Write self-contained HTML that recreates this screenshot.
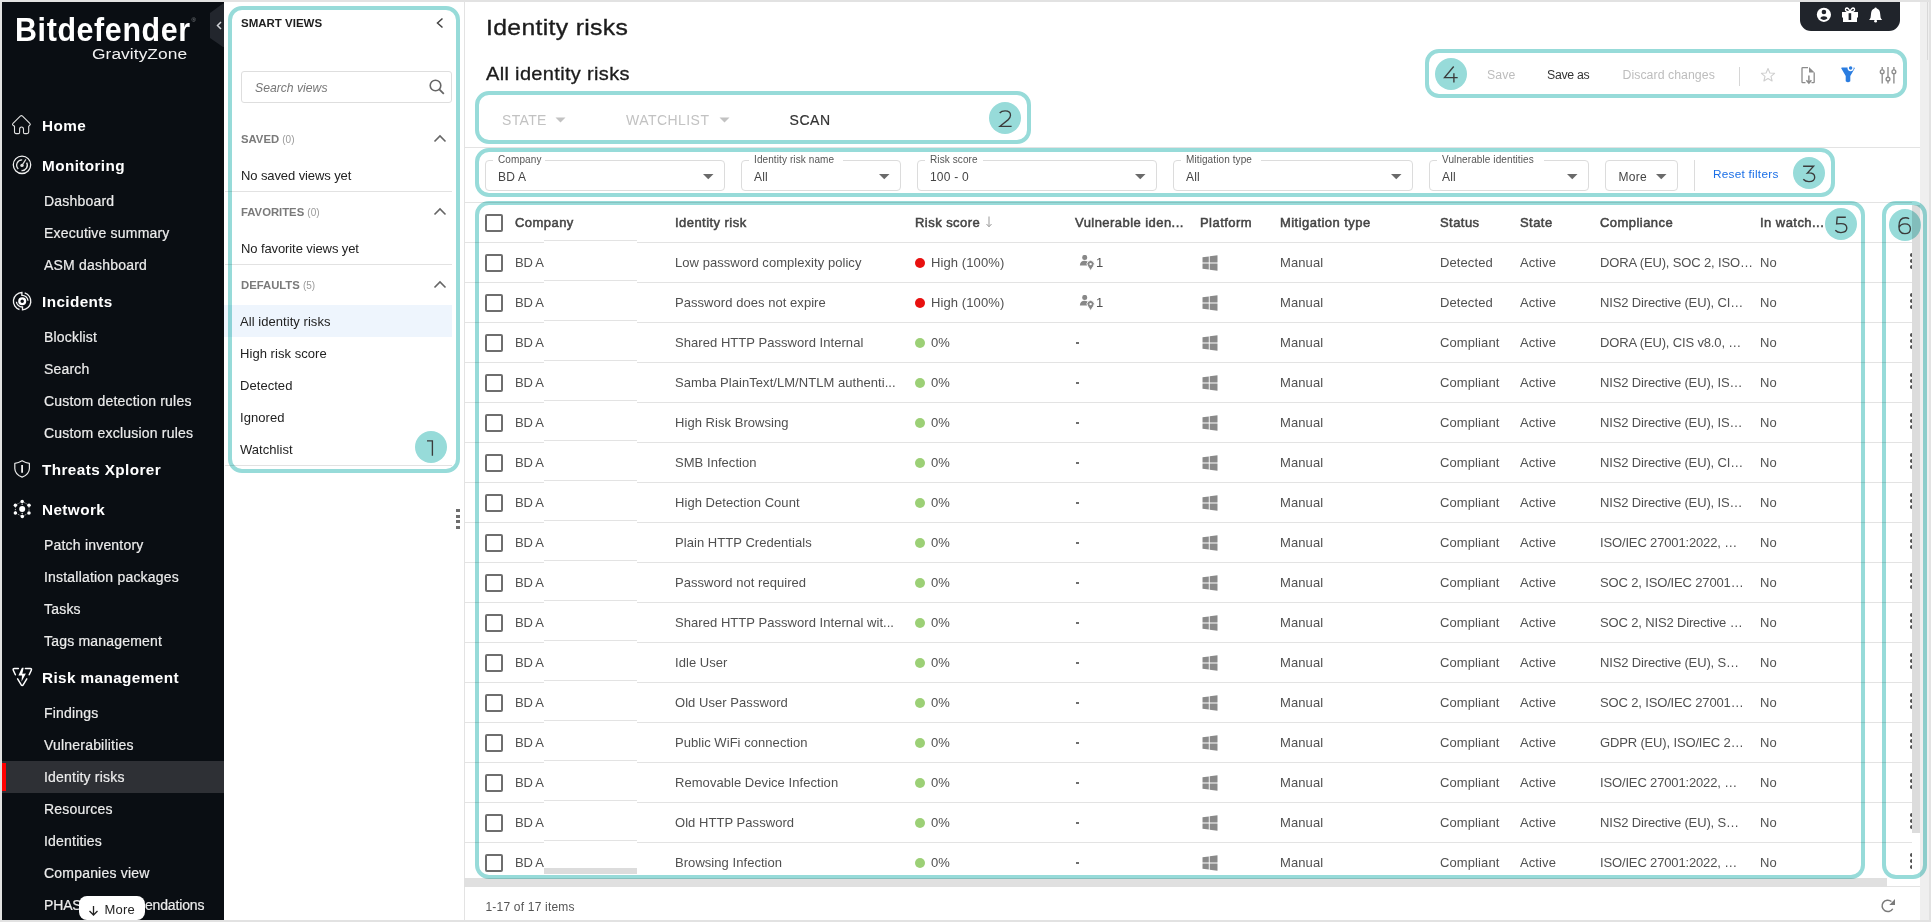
<!DOCTYPE html><html><head><meta charset="utf-8"><style>
html,body{margin:0;padding:0;width:1931px;height:922px;overflow:hidden;background:#fff;}
body{position:relative;font-family:"Liberation Sans",sans-serif;}
.t{position:absolute;white-space:nowrap;}
.r{position:absolute;}
.tb{border:4px solid #97dbd9;mix-blend-mode:multiply;}
.tc{background:#97dbd9;border-radius:50%;mix-blend-mode:multiply;text-align:center;color:#3a3a3a;font-weight:300;}
</style></head><body>
<div class="r" style="left:0px;top:0px;width:1931px;height:922px;background:#e2e2e2;"></div>
<div class="r" style="left:2px;top:2px;width:1927px;height:918px;background:#ffffff;"></div>
<div class="r" style="left:2px;top:2px;width:222px;height:918px;background:#0a0e13;"></div>
<svg class="r" style="left:210px;top:3px;" width="14" height="44" viewBox="0 0 14 44"><path d="M14 0.5 L14 44 L13 44 L0 35 L0 10 L13 0.5 Z" fill="#22262d"/><path d="M11 19 L7.5 22.5 L11 26" stroke="#cfd2d6" stroke-width="1.5" fill="none"/></svg>
<div class="t" style="left:15px;top:13.07px;font-size:33px;line-height:33px;color:#fff;font-weight:700;letter-spacing:0.7px;transform:scaleX(0.92);transform-origin:0 0;">Bitdefender</div>
<div class="t" style="left:191.5px;top:16.92px;font-size:6px;line-height:6px;color:#8a8d91;">®</div>
<div class="t" style="left:91.5px;top:46.38px;font-size:15.5px;line-height:15.5px;color:#f2f2f2;letter-spacing:0.05px;transform:scaleX(1.12);transform-origin:0 0;">GravityZone</div>
<div class="t" style="left:42px;top:118.05px;font-size:15.3px;line-height:15.3px;color:#fff;font-weight:700;letter-spacing:0.4px;">Home</div>
<div class="t" style="left:42px;top:158.05px;font-size:15.3px;line-height:15.3px;color:#fff;font-weight:700;letter-spacing:0.4px;">Monitoring</div>
<div class="t" style="left:42px;top:294.05px;font-size:15.3px;line-height:15.3px;color:#fff;font-weight:700;letter-spacing:0.4px;">Incidents</div>
<div class="t" style="left:42px;top:462.05px;font-size:15.3px;line-height:15.3px;color:#fff;font-weight:700;letter-spacing:0.4px;">Threats Xplorer</div>
<div class="t" style="left:42px;top:502.05px;font-size:15.3px;line-height:15.3px;color:#fff;font-weight:700;letter-spacing:0.4px;">Network</div>
<div class="t" style="left:42px;top:670.05px;font-size:15.3px;line-height:15.3px;color:#fff;font-weight:700;letter-spacing:0.4px;">Risk management</div>
<div class="r" style="left:2px;top:761px;width:222px;height:32px;background:#2e3035;"></div>
<div class="r" style="left:2px;top:763px;width:4px;height:28px;background:#ff0000;"></div>
<div class="t" style="left:44px;top:194.15px;font-size:14px;line-height:14px;color:#ececec;letter-spacing:0.2px;-webkit-text-stroke:0.2px #ececec;">Dashboard</div>
<div class="t" style="left:44px;top:226.15px;font-size:14px;line-height:14px;color:#ececec;letter-spacing:0.2px;-webkit-text-stroke:0.2px #ececec;">Executive summary</div>
<div class="t" style="left:44px;top:258.15px;font-size:14px;line-height:14px;color:#ececec;letter-spacing:0.2px;-webkit-text-stroke:0.2px #ececec;">ASM dashboard</div>
<div class="t" style="left:44px;top:330.15px;font-size:14px;line-height:14px;color:#ececec;letter-spacing:0.2px;-webkit-text-stroke:0.2px #ececec;">Blocklist</div>
<div class="t" style="left:44px;top:362.15px;font-size:14px;line-height:14px;color:#ececec;letter-spacing:0.2px;-webkit-text-stroke:0.2px #ececec;">Search</div>
<div class="t" style="left:44px;top:394.15px;font-size:14px;line-height:14px;color:#ececec;letter-spacing:0.2px;-webkit-text-stroke:0.2px #ececec;">Custom detection rules</div>
<div class="t" style="left:44px;top:426.15px;font-size:14px;line-height:14px;color:#ececec;letter-spacing:0.2px;-webkit-text-stroke:0.2px #ececec;">Custom exclusion rules</div>
<div class="t" style="left:44px;top:538.15px;font-size:14px;line-height:14px;color:#ececec;letter-spacing:0.2px;-webkit-text-stroke:0.2px #ececec;">Patch inventory</div>
<div class="t" style="left:44px;top:570.15px;font-size:14px;line-height:14px;color:#ececec;letter-spacing:0.2px;-webkit-text-stroke:0.2px #ececec;">Installation packages</div>
<div class="t" style="left:44px;top:602.15px;font-size:14px;line-height:14px;color:#ececec;letter-spacing:0.2px;-webkit-text-stroke:0.2px #ececec;">Tasks</div>
<div class="t" style="left:44px;top:634.15px;font-size:14px;line-height:14px;color:#ececec;letter-spacing:0.2px;-webkit-text-stroke:0.2px #ececec;">Tags management</div>
<div class="t" style="left:44px;top:706.15px;font-size:14px;line-height:14px;color:#ececec;letter-spacing:0.2px;-webkit-text-stroke:0.2px #ececec;">Findings</div>
<div class="t" style="left:44px;top:738.15px;font-size:14px;line-height:14px;color:#ececec;letter-spacing:0.2px;-webkit-text-stroke:0.2px #ececec;">Vulnerabilities</div>
<div class="t" style="left:44px;top:770.15px;font-size:14px;line-height:14px;color:#ececec;letter-spacing:0.2px;-webkit-text-stroke:0.2px #ececec;">Identity risks</div>
<div class="t" style="left:44px;top:802.15px;font-size:14px;line-height:14px;color:#ececec;letter-spacing:0.2px;-webkit-text-stroke:0.2px #ececec;">Resources</div>
<div class="t" style="left:44px;top:834.15px;font-size:14px;line-height:14px;color:#ececec;letter-spacing:0.2px;-webkit-text-stroke:0.2px #ececec;">Identities</div>
<div class="t" style="left:44px;top:866.15px;font-size:14px;line-height:14px;color:#ececec;letter-spacing:0.2px;-webkit-text-stroke:0.2px #ececec;">Companies view</div>
<div class="t" style="left:44px;top:898.15px;font-size:14px;line-height:14px;color:#ececec;letter-spacing:-0.15px;-webkit-text-stroke:0.2px #ececec;">PHASR recommendations</div>
<svg class="r" style="left:11px;top:114px;" width="22" height="22" viewBox="0 0 22 22"><path d="M3.5 12.3 L2 11.2 Q1 10.3 2 9.4 L9.3 2.2 Q10.4 1.2 11.5 2.2 L18.8 9.4 Q19.8 10.3 18.8 11.2 L17.7 12.3 L17.7 18 Q17.7 19.6 16 19.6 L13.7 19.6 Q12.5 19.6 12.5 18.4 L12.5 15.2 Q12.5 13 10.5 13 Q8.6 13 8.6 15.2 L8.6 18.4 Q8.6 19.6 7.4 19.6 L5.2 19.6 Q3.5 19.6 3.5 18 Z" fill="none" stroke="#e0e0e0" stroke-width="1.1" stroke-linejoin="round"/></svg>
<svg class="r" style="left:11px;top:155px;" width="22" height="22" viewBox="0 0 22 22"><circle cx="11" cy="9.8" r="8.7" fill="none" stroke="#f0f0f0" stroke-width="1.3"/><path d="M11.2 4.9 A5.3 5.3 0 0 0 7.25 13.95 M15.6 7.55 A5.3 5.3 0 0 1 10.5 15.5" fill="none" stroke="#e8e8e8" stroke-width="1.3"/><path d="M11 10.4 L14.9 4.4" stroke="#ddd" stroke-width="1.2"/><circle cx="11" cy="10.4" r="1.7" fill="#ddd"/></svg>
<svg class="r" style="left:11px;top:290px;" width="22" height="22" viewBox="0 0 22 22"><path d="M8.5 19.5 A8.7 8.7 0 0 1 10.9 2.5 L10.9 5.4 A5.8 5.8 0 0 1 17 10.7 M13.7 2.9 A8.7 8.7 0 0 1 11.5 19.9 L11.5 17 A5.8 5.8 0 0 1 5.4 11.7" fill="none" stroke="#f2f2f2" stroke-width="1.35"/><circle cx="11.2" cy="11.2" r="2.9" fill="none" stroke="#fff" stroke-width="2.3"/></svg>
<svg class="r" style="left:11px;top:458px;" width="22" height="22" viewBox="0 0 22 22"><path d="M11.1 2.7 Q14.8 5 18.4 5.3 L18.4 10.5 Q18.2 16.5 11.1 19.1 Q4 16.5 3.8 10.5 L3.8 5.3 Q7.4 5 11.1 2.7 Z" fill="none" stroke="#e8e8e8" stroke-width="1.2" stroke-linejoin="round"/><path d="M11.1 7 L11.1 14.8" stroke="#f0f0f0" stroke-width="1.8"/></svg>
<svg class="r" style="left:11px;top:498px;" width="22" height="22" viewBox="0 0 22 22"><path d="M11.2 3.4 L18 7.2 L18 14.9 L11.3 18.5 L4.4 14.9 L4.4 7.2 Z" stroke="#bbb" stroke-width="0.9" fill="none" stroke-dasharray="1.3 1.1"/><g fill="#fff"><circle cx="11.2" cy="11" r="3.0"/><circle cx="11.2" cy="3.4" r="1.75"/><circle cx="11.3" cy="18.5" r="1.75"/><circle cx="4.4" cy="7.2" r="1.75"/><circle cx="18" cy="7.2" r="1.75"/><circle cx="4.4" cy="14.9" r="1.75"/><circle cx="18" cy="14.9" r="1.75"/></g><circle cx="11.2" cy="6.2" r="0.8" fill="#ccc"/><circle cx="11.2" cy="15.6" r="0.8" fill="#ccc"/></svg>
<svg class="r" style="left:11px;top:666px;" width="22" height="22" viewBox="0 0 22 22"><path d="M7.4 2.6 L3.4 2.6 Q1.6 2.6 2.3 4.2 L4.4 8.8 M14.4 2.6 L19.2 2.6 Q21 2.6 20.3 4.2 L18.2 8.8 M6.6 12.8 L10.1 18.7 Q11.2 20.2 12.3 18.7 L15.8 12.8" fill="none" stroke="#fff" stroke-width="1.5" stroke-linecap="round" stroke-linejoin="round"/><path d="M10.9 1.8 L7.4 9.5 L11 9.4 L10.5 15.8 L14.9 7.6 L11.3 7.7 L12.7 1.8 Z" fill="#fff"/></svg>
<div class="r" style="left:79px;top:896px;width:66px;height:24px;background:#ffffff;border-radius:8px;"></div>
<svg class="r" style="left:88px;top:905px;" width="11" height="11" viewBox="0 0 11 11"><path d="M5.5 1 L5.5 10 M1.5 6 L5.5 10 L9.5 6" stroke="#222" stroke-width="1.3" fill="none"/></svg>
<div class="t" style="left:104.5px;top:902.50px;font-size:13px;line-height:13px;color:#222;letter-spacing:0.2px;">More</div>
<div class="r" style="left:464px;top:2px;width:1px;height:918px;background:#e3e3e3;"></div>
<div class="t" style="left:241px;top:17.57px;font-size:11.5px;line-height:11.5px;color:#1e1e1e;font-weight:700;">SMART VIEWS</div>
<svg class="r" style="left:435px;top:17px;" width="10" height="12" viewBox="0 0 10 12"><path d="M7.5 1.5 L2.5 6 L7.5 10.5" stroke="#444" stroke-width="1.5" fill="none"/></svg>
<div class="r" style="left:241px;top:71px;width:211px;height:32px;background:#fff;box-sizing:border-box;border:1px solid #dedede;border-radius:3px;"></div>
<div class="t" style="left:255px;top:81.67px;font-size:12.2px;line-height:12.2px;color:#777;font-style:italic;">Search views</div>
<svg class="r" style="left:428px;top:78px;" width="18" height="18" viewBox="0 0 18 18"><circle cx="7.5" cy="7.5" r="5.3" fill="none" stroke="#666" stroke-width="1.6"/><path d="M11.3 11.3 L15.8 15.8" stroke="#666" stroke-width="1.8"/></svg>
<div class="t" style="left:241px;top:133.83px;font-size:11.3px;line-height:11.3px;color:#7a7a7a;font-weight:700">SAVED <span style="font-weight:400;font-size:10px;color:#999">(0)</span></div>
<svg class="r" style="left:433px;top:134.4px;" width="14" height="9" viewBox="0 0 14 9"><path d="M1.5 7.5 L7 2 L12.5 7.5" stroke="#666" stroke-width="1.6" fill="none"/></svg>
<div class="t" style="left:241px;top:206.83px;font-size:11.3px;line-height:11.3px;color:#7a7a7a;font-weight:700">FAVORITES <span style="font-weight:400;font-size:10px;color:#999">(0)</span></div>
<svg class="r" style="left:433px;top:207.4px;" width="14" height="9" viewBox="0 0 14 9"><path d="M1.5 7.5 L7 2 L12.5 7.5" stroke="#666" stroke-width="1.6" fill="none"/></svg>
<div class="t" style="left:241px;top:279.83px;font-size:11.3px;line-height:11.3px;color:#7a7a7a;font-weight:700">DEFAULTS <span style="font-weight:400;font-size:10px;color:#999">(5)</span></div>
<svg class="r" style="left:433px;top:280.4px;" width="14" height="9" viewBox="0 0 14 9"><path d="M1.5 7.5 L7 2 L12.5 7.5" stroke="#666" stroke-width="1.6" fill="none"/></svg>
<div class="t" style="left:241px;top:169.00px;font-size:13px;line-height:13px;color:#222;letter-spacing:-0.1px;">No saved views yet</div>
<div class="r" style="left:225px;top:191px;width:227px;height:1px;background:#e2e2e2;"></div>
<div class="t" style="left:241px;top:242.00px;font-size:13px;line-height:13px;color:#222;letter-spacing:-0.1px;">No favorite views yet</div>
<div class="r" style="left:225px;top:264px;width:227px;height:1px;background:#e2e2e2;"></div>
<div class="r" style="left:224px;top:305px;width:228px;height:32px;background:#eef5fd;"></div>
<div class="t" style="left:240px;top:315.40px;font-size:13px;line-height:13px;color:#222;letter-spacing:0.05px;">All identity risks</div>
<div class="t" style="left:240px;top:347.40px;font-size:13px;line-height:13px;color:#222;letter-spacing:0.05px;">High risk score</div>
<div class="t" style="left:240px;top:379.40px;font-size:13px;line-height:13px;color:#222;letter-spacing:0.05px;">Detected</div>
<div class="t" style="left:240px;top:411.40px;font-size:13px;line-height:13px;color:#222;letter-spacing:0.05px;">Ignored</div>
<div class="t" style="left:240px;top:443.40px;font-size:13px;line-height:13px;color:#222;letter-spacing:0.05px;">Watchlist</div>
<div class="r" style="left:225px;top:465px;width:227px;height:1px;background:#e2e2e2;"></div>
<div class="r" style="left:456.2px;top:509.2px;width:3.8px;height:2.8px;background:#6d6d6d;"></div>
<div class="r" style="left:456.2px;top:514.8px;width:3.8px;height:2.8px;background:#6d6d6d;"></div>
<div class="r" style="left:456.2px;top:520.4px;width:3.8px;height:2.8px;background:#6d6d6d;"></div>
<div class="r" style="left:456.2px;top:526.0px;width:3.8px;height:2.8px;background:#6d6d6d;"></div>
<div class="t" style="left:486px;top:16.55px;font-size:22.5px;line-height:22.5px;color:#1c1c1c;letter-spacing:0.3px;transform:scaleX(1.1);transform-origin:0 0;-webkit-text-stroke:0.35px #1c1c1c;">Identity risks</div>
<div class="t" style="left:486px;top:64.59px;font-size:18.2px;line-height:18.2px;color:#1c1c1c;letter-spacing:0.3px;transform:scaleX(1.1);transform-origin:0 0;-webkit-text-stroke:0.3px #1c1c1c;">All identity risks</div>
<div class="r" style="left:1800px;top:2px;width:100px;height:29px;background:#20242b;border-radius:0 0 11px 11px;"></div>
<svg class="r" style="left:1816px;top:7px;" width="16" height="16" viewBox="0 0 16 16"><circle cx="7.9" cy="7.8" r="7.1" fill="#fff"/><circle cx="7.9" cy="5.0" r="2.3" fill="#20242b"/><path d="M4.4 11.6 Q4.8 9.2 7.9 9.2 Q11 9.2 11.4 11.6 Q9.8 12.9 7.9 12.9 Q6 12.9 4.4 11.6 Z" fill="#20242b"/></svg>
<svg class="r" style="left:1842px;top:7px;" width="16" height="16" viewBox="0 0 16 16"><path d="M0 5 H16 V10.4 H15 V15 H1 V10.4 H0 Z" fill="#fff"/><rect x="6.6" y="6.2" width="2.6" height="6.8" fill="#20242b"/><path d="M8 4.6 Q4.5 4.8 3.6 3.4 Q3 1.2 5 1 Q6.5 1 8 4.6 Q9.5 1 11 1 Q13 1.2 12.4 3.4 Q11.5 4.8 8 4.6" fill="none" stroke="#fff" stroke-width="1.3"/></svg>
<svg class="r" style="left:1869px;top:7px;" width="14" height="16" viewBox="0 0 14 16"><path d="M6.6 0.6 Q7.6 0.6 7.8 1.6 Q11 2.5 11.2 7 L11.6 10.5 Q12.2 12.2 13.2 13 L0 13 Q1 12.2 1.6 10.5 L2 7 Q2.2 2.5 5.4 1.6 Q5.6 0.6 6.6 0.6 Z" fill="#fff"/><circle cx="6.6" cy="14.2" r="1.4" fill="#fff"/></svg>
<div class="t" style="left:1487px;top:68.79px;font-size:12.3px;line-height:12.3px;color:#bdbdbd;letter-spacing:0.1px;">Save</div>
<div class="t" style="left:1547px;top:68.79px;font-size:12.3px;line-height:12.3px;color:#333;letter-spacing:-0.3px;">Save as</div>
<div class="t" style="left:1622.5px;top:68.79px;font-size:12.3px;line-height:12.3px;color:#bdbdbd;letter-spacing:0.05px;">Discard changes</div>
<div class="r" style="left:1739px;top:67px;width:1px;height:19px;background:#d6d6d6;"></div>
<svg class="r" style="left:1760px;top:67px;" width="16" height="16" viewBox="0 0 16 16"><path d="M8 1.5 L9.9 6 L14.6 6.3 L11 9.4 L12.1 14 L8 11.5 L3.9 14 L5 9.4 L1.4 6.3 L6.1 6 Z" fill="none" stroke="#cfcfcf" stroke-width="1.1" stroke-linejoin="round"/></svg>
<svg class="r" style="left:1800px;top:66px;" width="16" height="19" viewBox="0 0 16 19"><path d="M8 1.6 L2.6 1.6 Q2 1.6 2 2.2 L2 16 Q2 16.6 2.6 16.6 L5.5 16.6 M11.5 16.6 L13.6 16.6 Q14.2 16.6 14.2 16 L14.2 6.5" fill="none" stroke="#8c8c8c" stroke-width="1.3"/><path d="M9 1 L14.6 6.6 L9 6.6 Z" fill="#8c8c8c"/><path d="M8.9 9.5 L8.9 16.5 M6.4 14.2 L8.9 17 L11.4 14.2" stroke="#8c8c8c" stroke-width="1.5" fill="none"/></svg>
<svg class="r" style="left:1840px;top:66px;" width="16" height="17" viewBox="0 0 16 17"><path d="M1.2 2.2 Q1.2 1.4 2 1.4 L14 1.4 Q14.8 1.4 14.8 2.2 L10.3 10 L10.3 15.3 Q8 17.3 5.7 15.3 L5.7 10 Z" fill="#2b7de0"/><circle cx="10.6" cy="2.1" r="3.1" fill="#fff"/><circle cx="10.6" cy="1.9" r="1.75" fill="#2b7de0"/></svg>
<svg class="r" style="left:1879px;top:66px;" width="19" height="19" viewBox="0 0 19 19"><g stroke="#8c8c8c" stroke-width="1.35" fill="none"><path d="M3.2 1.1 V17.6 M9 1.1 V17.6 M14.9 1.1 V17.6"/><circle cx="3.2" cy="5.7" r="1.9" fill="#fff"/><circle cx="9" cy="13.1" r="1.9" fill="#fff"/><circle cx="14.9" cy="5.7" r="1.9" fill="#fff"/></g></svg>
<div class="t" style="left:502px;top:113.15px;font-size:14px;line-height:14px;color:#c2c2c2;letter-spacing:0.35px;">STATE</div>
<svg class="r" style="left:555px;top:117px;" width="11" height="6" viewBox="0 0 11 6"><path d="M0.5 0.5 L10.5 0.5 L5.5 5.5 Z" fill="#c2c2c2"/></svg>
<div class="t" style="left:626px;top:113.15px;font-size:14px;line-height:14px;color:#c2c2c2;letter-spacing:0.45px;">WATCHLIST</div>
<svg class="r" style="left:719px;top:117px;" width="11" height="6" viewBox="0 0 11 6"><path d="M0.5 0.5 L10.5 0.5 L5.5 5.5 Z" fill="#c2c2c2"/></svg>
<div class="t" style="left:789.5px;top:113.15px;font-size:14px;line-height:14px;color:#333;letter-spacing:0.55px;-webkit-text-stroke:0.2px #333;">SCAN</div>
<div class="r" style="left:464px;top:147px;width:1456px;height:1px;background:#e3e3e3;"></div>
<div class="r" style="left:464px;top:202px;width:1448px;height:1px;background:#e3e3e3;"></div>
<div class="r" style="left:485px;top:160px;width:240px;height:31px;box-sizing:border-box;border:1px solid #dcdcdc;border-radius:4px;"></div>
<div class="r" style="left:493px;top:158px;width:52px;height:4px;background:#fff;"></div>
<div class="t" style="left:498px;top:154.73px;font-size:10px;line-height:10px;color:#555;letter-spacing:0.1px;">Company</div>
<div class="t" style="left:498px;top:171.04px;font-size:12px;line-height:12px;color:#444;letter-spacing:0.2px;">BD A</div>
<svg class="r" style="left:703px;top:174px;" width="11" height="6" viewBox="0 0 11 6"><path d="M0 0 L10.5 0 L5.25 5.3 Z" fill="#6a6a6a"/></svg>
<div class="r" style="left:741px;top:160px;width:160px;height:31px;box-sizing:border-box;border:1px solid #dcdcdc;border-radius:4px;"></div>
<div class="r" style="left:749px;top:158px;width:94px;height:4px;background:#fff;"></div>
<div class="t" style="left:754px;top:154.73px;font-size:10px;line-height:10px;color:#555;letter-spacing:0.1px;">Identity risk name</div>
<div class="t" style="left:754px;top:171.04px;font-size:12px;line-height:12px;color:#444;letter-spacing:0.2px;">All</div>
<svg class="r" style="left:879px;top:174px;" width="11" height="6" viewBox="0 0 11 6"><path d="M0 0 L10.5 0 L5.25 5.3 Z" fill="#6a6a6a"/></svg>
<div class="r" style="left:917px;top:160px;width:240px;height:31px;box-sizing:border-box;border:1px solid #dcdcdc;border-radius:4px;"></div>
<div class="r" style="left:925px;top:158px;width:58px;height:4px;background:#fff;"></div>
<div class="t" style="left:930px;top:154.73px;font-size:10px;line-height:10px;color:#555;letter-spacing:0.1px;">Risk score</div>
<div class="t" style="left:930px;top:171.04px;font-size:12px;line-height:12px;color:#444;letter-spacing:0.2px;">100 - 0</div>
<svg class="r" style="left:1135px;top:174px;" width="11" height="6" viewBox="0 0 11 6"><path d="M0 0 L10.5 0 L5.25 5.3 Z" fill="#6a6a6a"/></svg>
<div class="r" style="left:1173px;top:160px;width:240px;height:31px;box-sizing:border-box;border:1px solid #dcdcdc;border-radius:4px;"></div>
<div class="r" style="left:1181px;top:158px;width:80px;height:4px;background:#fff;"></div>
<div class="t" style="left:1186px;top:154.73px;font-size:10px;line-height:10px;color:#555;letter-spacing:0.1px;">Mitigation type</div>
<div class="t" style="left:1186px;top:171.04px;font-size:12px;line-height:12px;color:#444;letter-spacing:0.2px;">All</div>
<svg class="r" style="left:1391px;top:174px;" width="11" height="6" viewBox="0 0 11 6"><path d="M0 0 L10.5 0 L5.25 5.3 Z" fill="#6a6a6a"/></svg>
<div class="r" style="left:1429px;top:160px;width:160px;height:31px;box-sizing:border-box;border:1px solid #dcdcdc;border-radius:4px;"></div>
<div class="r" style="left:1437px;top:158px;width:107px;height:4px;background:#fff;"></div>
<div class="t" style="left:1442px;top:154.73px;font-size:10px;line-height:10px;color:#555;letter-spacing:0.1px;">Vulnerable identities</div>
<div class="t" style="left:1442px;top:171.04px;font-size:12px;line-height:12px;color:#444;letter-spacing:0.2px;">All</div>
<svg class="r" style="left:1567px;top:174px;" width="11" height="6" viewBox="0 0 11 6"><path d="M0 0 L10.5 0 L5.25 5.3 Z" fill="#6a6a6a"/></svg>
<div class="r" style="left:1605px;top:160px;width:73px;height:31px;box-sizing:border-box;border:1px solid #dcdcdc;border-radius:4px;"></div>
<div class="t" style="left:1618.5px;top:171.04px;font-size:12px;line-height:12px;color:#444;letter-spacing:0.3px;">More</div>
<svg class="r" style="left:1655.5px;top:174px;" width="11" height="6" viewBox="0 0 11 6"><path d="M0 0 L10.5 0 L5.25 5.3 Z" fill="#6a6a6a"/></svg>
<div class="r" style="left:1694px;top:160px;width:1px;height:31px;background:#dcdcdc;"></div>
<div class="t" style="left:1713px;top:168.81px;font-size:11.8px;line-height:11.8px;color:#1b6fe6;letter-spacing:0.25px;">Reset filters</div>
<div class="r" style="left:485px;top:214px;width:18px;height:18px;background:transparent;box-sizing:border-box;border:2px solid #6e6e6e;border-radius:2px;"></div>
<div class="t" style="left:515px;top:216.00px;font-size:13px;line-height:13px;color:#444;letter-spacing:0.45px;-webkit-text-stroke:0.5px #444;">Company</div>
<div class="t" style="left:675px;top:216.00px;font-size:13px;line-height:13px;color:#444;letter-spacing:0.45px;-webkit-text-stroke:0.5px #444;">Identity risk</div>
<div class="t" style="left:915px;top:216.00px;font-size:13px;line-height:13px;color:#444;letter-spacing:0.45px;-webkit-text-stroke:0.5px #444;">Risk score</div>
<div class="t" style="left:1075px;top:216.00px;font-size:13px;line-height:13px;color:#444;letter-spacing:0.45px;-webkit-text-stroke:0.5px #444;">Vulnerable iden...</div>
<div class="t" style="left:1200px;top:216.00px;font-size:13px;line-height:13px;color:#444;letter-spacing:0.45px;-webkit-text-stroke:0.5px #444;">Platform</div>
<div class="t" style="left:1280px;top:216.00px;font-size:13px;line-height:13px;color:#444;letter-spacing:0.45px;-webkit-text-stroke:0.5px #444;">Mitigation type</div>
<div class="t" style="left:1440px;top:216.00px;font-size:13px;line-height:13px;color:#444;letter-spacing:0.45px;-webkit-text-stroke:0.5px #444;">Status</div>
<div class="t" style="left:1520px;top:216.00px;font-size:13px;line-height:13px;color:#444;letter-spacing:0.45px;-webkit-text-stroke:0.5px #444;">State</div>
<div class="t" style="left:1600px;top:216.00px;font-size:13px;line-height:13px;color:#444;letter-spacing:0.45px;-webkit-text-stroke:0.5px #444;">Compliance</div>
<div class="t" style="left:1760px;top:216.00px;font-size:13px;line-height:13px;color:#444;letter-spacing:0.45px;-webkit-text-stroke:0.5px #444;">In watch...</div>
<svg class="r" style="left:985px;top:215.5px;" width="8" height="12" viewBox="0 0 8 12"><path d="M4 0.5 L4 10.5 M1.5 8 L4 10.8 L6.5 8" stroke="#999" stroke-width="1" fill="none"/></svg>
<div class="r" style="left:464px;top:242px;width:80px;height:1px;background:#e3e3e3;"></div>
<div class="r" style="left:544px;top:240px;width:93px;height:1px;background:#e3e3e3;"></div>
<div class="r" style="left:637px;top:242px;width:1275px;height:1px;background:#e3e3e3;"></div>
<div class="r" style="left:485px;top:254px;width:18px;height:18px;background:transparent;box-sizing:border-box;border:2px solid #6e6e6e;border-radius:2px;"></div>
<div class="t" style="left:515px;top:255.70px;font-size:13px;line-height:13px;color:#505050;letter-spacing:-0.25px;">BD A</div>
<div class="t" style="left:675px;top:255.70px;font-size:13px;line-height:13px;color:#505050;letter-spacing:0.05px;">Low password complexity policy</div>
<div class="r" style="left:915px;top:258px;width:10px;height:10px;background:#e8100f;border-radius:50%;"></div>
<div class="t" style="left:931px;top:255.70px;font-size:13px;line-height:13px;color:#505050;letter-spacing:0.1px;">High (100%)</div>
<svg class="r" style="left:1079px;top:255px;" width="16" height="16" viewBox="0 0 16 16"><circle cx="5.7" cy="2.4" r="2.5" fill="#888"/><path d="M0.9 10.6 Q0.9 5.7 5.7 5.7 Q8.4 5.7 9.6 7.4 L8.2 10.6 Z" fill="#888"/><path d="M11.6 15.6 L8.6 11 A3.6 3.6 0 1 1 14.6 11 Z" fill="#888" stroke="#fff" stroke-width="0.9"/><circle cx="11.6" cy="9.1" r="1.2" fill="#fff"/></svg>
<div class="t" style="left:1096px;top:255.70px;font-size:13px;line-height:13px;color:#505050;">1</div>
<svg class="r" style="left:1202px;top:255px;" width="16" height="16" viewBox="0 0 16 16"><path d="M0.5 2.3 L6.8 1.4 L6.8 7.6 L0.5 7.6 Z M7.7 1.3 L15.5 0.2 L15.5 7.6 L7.7 7.6 Z M0.5 8.5 L6.8 8.5 L6.8 14.6 L0.5 13.7 Z M7.7 8.5 L15.5 8.5 L15.5 15.8 L7.7 14.7 Z" fill="#8a8a8a"/></svg>
<div class="t" style="left:1280px;top:255.70px;font-size:13px;line-height:13px;color:#505050;letter-spacing:0.1px;">Manual</div>
<div class="t" style="left:1440px;top:255.70px;font-size:13px;line-height:13px;color:#505050;letter-spacing:0.1px;">Detected</div>
<div class="t" style="left:1520px;top:255.70px;font-size:13px;line-height:13px;color:#505050;letter-spacing:0.1px;">Active</div>
<div class="t" style="left:1600px;top:255.70px;font-size:13px;line-height:13px;color:#505050;letter-spacing:-0.15px;">DORA (EU), SOC 2, ISO…</div>
<div class="t" style="left:1760px;top:255.70px;font-size:13px;line-height:13px;color:#505050;letter-spacing:0.1px;">No</div>
<div class="r" style="left:1900px;top:250px;width:12px;height:22px;overflow:hidden"><div class="r" style="left:10.2px;top:3px;width:3.6px;height:3.6px;border-radius:50%;background:#555"></div><div class="r" style="left:10.2px;top:9px;width:3.6px;height:3.6px;border-radius:50%;background:#555"></div><div class="r" style="left:10.2px;top:15px;width:3.6px;height:3.6px;border-radius:50%;background:#555"></div></div>
<div class="r" style="left:464px;top:282px;width:80px;height:1px;background:#e3e3e3;"></div>
<div class="r" style="left:544px;top:280px;width:93px;height:1px;background:#e3e3e3;"></div>
<div class="r" style="left:637px;top:282px;width:1275px;height:1px;background:#e3e3e3;"></div>
<div class="r" style="left:485px;top:294px;width:18px;height:18px;background:transparent;box-sizing:border-box;border:2px solid #6e6e6e;border-radius:2px;"></div>
<div class="t" style="left:515px;top:295.70px;font-size:13px;line-height:13px;color:#505050;letter-spacing:-0.25px;">BD A</div>
<div class="t" style="left:675px;top:295.70px;font-size:13px;line-height:13px;color:#505050;letter-spacing:0.05px;">Password does not expire</div>
<div class="r" style="left:915px;top:298px;width:10px;height:10px;background:#e8100f;border-radius:50%;"></div>
<div class="t" style="left:931px;top:295.70px;font-size:13px;line-height:13px;color:#505050;letter-spacing:0.1px;">High (100%)</div>
<svg class="r" style="left:1079px;top:295px;" width="16" height="16" viewBox="0 0 16 16"><circle cx="5.7" cy="2.4" r="2.5" fill="#888"/><path d="M0.9 10.6 Q0.9 5.7 5.7 5.7 Q8.4 5.7 9.6 7.4 L8.2 10.6 Z" fill="#888"/><path d="M11.6 15.6 L8.6 11 A3.6 3.6 0 1 1 14.6 11 Z" fill="#888" stroke="#fff" stroke-width="0.9"/><circle cx="11.6" cy="9.1" r="1.2" fill="#fff"/></svg>
<div class="t" style="left:1096px;top:295.70px;font-size:13px;line-height:13px;color:#505050;">1</div>
<svg class="r" style="left:1202px;top:295px;" width="16" height="16" viewBox="0 0 16 16"><path d="M0.5 2.3 L6.8 1.4 L6.8 7.6 L0.5 7.6 Z M7.7 1.3 L15.5 0.2 L15.5 7.6 L7.7 7.6 Z M0.5 8.5 L6.8 8.5 L6.8 14.6 L0.5 13.7 Z M7.7 8.5 L15.5 8.5 L15.5 15.8 L7.7 14.7 Z" fill="#8a8a8a"/></svg>
<div class="t" style="left:1280px;top:295.70px;font-size:13px;line-height:13px;color:#505050;letter-spacing:0.1px;">Manual</div>
<div class="t" style="left:1440px;top:295.70px;font-size:13px;line-height:13px;color:#505050;letter-spacing:0.1px;">Detected</div>
<div class="t" style="left:1520px;top:295.70px;font-size:13px;line-height:13px;color:#505050;letter-spacing:0.1px;">Active</div>
<div class="t" style="left:1600px;top:295.70px;font-size:13px;line-height:13px;color:#505050;letter-spacing:-0.15px;">NIS2 Directive (EU), CI…</div>
<div class="t" style="left:1760px;top:295.70px;font-size:13px;line-height:13px;color:#505050;letter-spacing:0.1px;">No</div>
<div class="r" style="left:1900px;top:290px;width:12px;height:22px;overflow:hidden"><div class="r" style="left:10.2px;top:3px;width:3.6px;height:3.6px;border-radius:50%;background:#555"></div><div class="r" style="left:10.2px;top:9px;width:3.6px;height:3.6px;border-radius:50%;background:#555"></div><div class="r" style="left:10.2px;top:15px;width:3.6px;height:3.6px;border-radius:50%;background:#555"></div></div>
<div class="r" style="left:464px;top:322px;width:80px;height:1px;background:#e3e3e3;"></div>
<div class="r" style="left:544px;top:320px;width:93px;height:1px;background:#e3e3e3;"></div>
<div class="r" style="left:637px;top:322px;width:1275px;height:1px;background:#e3e3e3;"></div>
<div class="r" style="left:485px;top:334px;width:18px;height:18px;background:transparent;box-sizing:border-box;border:2px solid #6e6e6e;border-radius:2px;"></div>
<div class="t" style="left:515px;top:335.70px;font-size:13px;line-height:13px;color:#505050;letter-spacing:-0.25px;">BD A</div>
<div class="t" style="left:675px;top:335.70px;font-size:13px;line-height:13px;color:#505050;letter-spacing:0.05px;">Shared HTTP Password Internal</div>
<div class="r" style="left:915px;top:338px;width:10px;height:10px;background:#9cd076;border-radius:50%;"></div>
<div class="t" style="left:931px;top:335.70px;font-size:13px;line-height:13px;color:#505050;letter-spacing:0.1px;">0%</div>
<div class="r" style="left:1076px;top:342.2px;width:3.2px;height:1.7px;background:#6e6e6e;"></div>
<svg class="r" style="left:1202px;top:335px;" width="16" height="16" viewBox="0 0 16 16"><path d="M0.5 2.3 L6.8 1.4 L6.8 7.6 L0.5 7.6 Z M7.7 1.3 L15.5 0.2 L15.5 7.6 L7.7 7.6 Z M0.5 8.5 L6.8 8.5 L6.8 14.6 L0.5 13.7 Z M7.7 8.5 L15.5 8.5 L15.5 15.8 L7.7 14.7 Z" fill="#8a8a8a"/></svg>
<div class="t" style="left:1280px;top:335.70px;font-size:13px;line-height:13px;color:#505050;letter-spacing:0.1px;">Manual</div>
<div class="t" style="left:1440px;top:335.70px;font-size:13px;line-height:13px;color:#505050;letter-spacing:0.1px;">Compliant</div>
<div class="t" style="left:1520px;top:335.70px;font-size:13px;line-height:13px;color:#505050;letter-spacing:0.1px;">Active</div>
<div class="t" style="left:1600px;top:335.70px;font-size:13px;line-height:13px;color:#505050;letter-spacing:-0.15px;">DORA (EU), CIS v8.0, …</div>
<div class="t" style="left:1760px;top:335.70px;font-size:13px;line-height:13px;color:#505050;letter-spacing:0.1px;">No</div>
<div class="r" style="left:1900px;top:330px;width:12px;height:22px;overflow:hidden"><div class="r" style="left:10.2px;top:3px;width:3.6px;height:3.6px;border-radius:50%;background:#555"></div><div class="r" style="left:10.2px;top:9px;width:3.6px;height:3.6px;border-radius:50%;background:#555"></div><div class="r" style="left:10.2px;top:15px;width:3.6px;height:3.6px;border-radius:50%;background:#555"></div></div>
<div class="r" style="left:464px;top:362px;width:80px;height:1px;background:#e3e3e3;"></div>
<div class="r" style="left:544px;top:360px;width:93px;height:1px;background:#e3e3e3;"></div>
<div class="r" style="left:637px;top:362px;width:1275px;height:1px;background:#e3e3e3;"></div>
<div class="r" style="left:485px;top:374px;width:18px;height:18px;background:transparent;box-sizing:border-box;border:2px solid #6e6e6e;border-radius:2px;"></div>
<div class="t" style="left:515px;top:375.70px;font-size:13px;line-height:13px;color:#505050;letter-spacing:-0.25px;">BD A</div>
<div class="t" style="left:675px;top:375.70px;font-size:13px;line-height:13px;color:#505050;letter-spacing:0.05px;">Samba PlainText/LM/NTLM authenti...</div>
<div class="r" style="left:915px;top:378px;width:10px;height:10px;background:#9cd076;border-radius:50%;"></div>
<div class="t" style="left:931px;top:375.70px;font-size:13px;line-height:13px;color:#505050;letter-spacing:0.1px;">0%</div>
<div class="r" style="left:1076px;top:382.2px;width:3.2px;height:1.7px;background:#6e6e6e;"></div>
<svg class="r" style="left:1202px;top:375px;" width="16" height="16" viewBox="0 0 16 16"><path d="M0.5 2.3 L6.8 1.4 L6.8 7.6 L0.5 7.6 Z M7.7 1.3 L15.5 0.2 L15.5 7.6 L7.7 7.6 Z M0.5 8.5 L6.8 8.5 L6.8 14.6 L0.5 13.7 Z M7.7 8.5 L15.5 8.5 L15.5 15.8 L7.7 14.7 Z" fill="#8a8a8a"/></svg>
<div class="t" style="left:1280px;top:375.70px;font-size:13px;line-height:13px;color:#505050;letter-spacing:0.1px;">Manual</div>
<div class="t" style="left:1440px;top:375.70px;font-size:13px;line-height:13px;color:#505050;letter-spacing:0.1px;">Compliant</div>
<div class="t" style="left:1520px;top:375.70px;font-size:13px;line-height:13px;color:#505050;letter-spacing:0.1px;">Active</div>
<div class="t" style="left:1600px;top:375.70px;font-size:13px;line-height:13px;color:#505050;letter-spacing:-0.15px;">NIS2 Directive (EU), IS…</div>
<div class="t" style="left:1760px;top:375.70px;font-size:13px;line-height:13px;color:#505050;letter-spacing:0.1px;">No</div>
<div class="r" style="left:1900px;top:370px;width:12px;height:22px;overflow:hidden"><div class="r" style="left:10.2px;top:3px;width:3.6px;height:3.6px;border-radius:50%;background:#555"></div><div class="r" style="left:10.2px;top:9px;width:3.6px;height:3.6px;border-radius:50%;background:#555"></div><div class="r" style="left:10.2px;top:15px;width:3.6px;height:3.6px;border-radius:50%;background:#555"></div></div>
<div class="r" style="left:464px;top:402px;width:80px;height:1px;background:#e3e3e3;"></div>
<div class="r" style="left:544px;top:400px;width:93px;height:1px;background:#e3e3e3;"></div>
<div class="r" style="left:637px;top:402px;width:1275px;height:1px;background:#e3e3e3;"></div>
<div class="r" style="left:485px;top:414px;width:18px;height:18px;background:transparent;box-sizing:border-box;border:2px solid #6e6e6e;border-radius:2px;"></div>
<div class="t" style="left:515px;top:415.70px;font-size:13px;line-height:13px;color:#505050;letter-spacing:-0.25px;">BD A</div>
<div class="t" style="left:675px;top:415.70px;font-size:13px;line-height:13px;color:#505050;letter-spacing:0.05px;">High Risk Browsing</div>
<div class="r" style="left:915px;top:418px;width:10px;height:10px;background:#9cd076;border-radius:50%;"></div>
<div class="t" style="left:931px;top:415.70px;font-size:13px;line-height:13px;color:#505050;letter-spacing:0.1px;">0%</div>
<div class="r" style="left:1076px;top:422.2px;width:3.2px;height:1.7px;background:#6e6e6e;"></div>
<svg class="r" style="left:1202px;top:415px;" width="16" height="16" viewBox="0 0 16 16"><path d="M0.5 2.3 L6.8 1.4 L6.8 7.6 L0.5 7.6 Z M7.7 1.3 L15.5 0.2 L15.5 7.6 L7.7 7.6 Z M0.5 8.5 L6.8 8.5 L6.8 14.6 L0.5 13.7 Z M7.7 8.5 L15.5 8.5 L15.5 15.8 L7.7 14.7 Z" fill="#8a8a8a"/></svg>
<div class="t" style="left:1280px;top:415.70px;font-size:13px;line-height:13px;color:#505050;letter-spacing:0.1px;">Manual</div>
<div class="t" style="left:1440px;top:415.70px;font-size:13px;line-height:13px;color:#505050;letter-spacing:0.1px;">Compliant</div>
<div class="t" style="left:1520px;top:415.70px;font-size:13px;line-height:13px;color:#505050;letter-spacing:0.1px;">Active</div>
<div class="t" style="left:1600px;top:415.70px;font-size:13px;line-height:13px;color:#505050;letter-spacing:-0.15px;">NIS2 Directive (EU), IS…</div>
<div class="t" style="left:1760px;top:415.70px;font-size:13px;line-height:13px;color:#505050;letter-spacing:0.1px;">No</div>
<div class="r" style="left:1900px;top:410px;width:12px;height:22px;overflow:hidden"><div class="r" style="left:10.2px;top:3px;width:3.6px;height:3.6px;border-radius:50%;background:#555"></div><div class="r" style="left:10.2px;top:9px;width:3.6px;height:3.6px;border-radius:50%;background:#555"></div><div class="r" style="left:10.2px;top:15px;width:3.6px;height:3.6px;border-radius:50%;background:#555"></div></div>
<div class="r" style="left:464px;top:442px;width:80px;height:1px;background:#e3e3e3;"></div>
<div class="r" style="left:544px;top:440px;width:93px;height:1px;background:#e3e3e3;"></div>
<div class="r" style="left:637px;top:442px;width:1275px;height:1px;background:#e3e3e3;"></div>
<div class="r" style="left:485px;top:454px;width:18px;height:18px;background:transparent;box-sizing:border-box;border:2px solid #6e6e6e;border-radius:2px;"></div>
<div class="t" style="left:515px;top:455.70px;font-size:13px;line-height:13px;color:#505050;letter-spacing:-0.25px;">BD A</div>
<div class="t" style="left:675px;top:455.70px;font-size:13px;line-height:13px;color:#505050;letter-spacing:0.05px;">SMB Infection</div>
<div class="r" style="left:915px;top:458px;width:10px;height:10px;background:#9cd076;border-radius:50%;"></div>
<div class="t" style="left:931px;top:455.70px;font-size:13px;line-height:13px;color:#505050;letter-spacing:0.1px;">0%</div>
<div class="r" style="left:1076px;top:462.2px;width:3.2px;height:1.7px;background:#6e6e6e;"></div>
<svg class="r" style="left:1202px;top:455px;" width="16" height="16" viewBox="0 0 16 16"><path d="M0.5 2.3 L6.8 1.4 L6.8 7.6 L0.5 7.6 Z M7.7 1.3 L15.5 0.2 L15.5 7.6 L7.7 7.6 Z M0.5 8.5 L6.8 8.5 L6.8 14.6 L0.5 13.7 Z M7.7 8.5 L15.5 8.5 L15.5 15.8 L7.7 14.7 Z" fill="#8a8a8a"/></svg>
<div class="t" style="left:1280px;top:455.70px;font-size:13px;line-height:13px;color:#505050;letter-spacing:0.1px;">Manual</div>
<div class="t" style="left:1440px;top:455.70px;font-size:13px;line-height:13px;color:#505050;letter-spacing:0.1px;">Compliant</div>
<div class="t" style="left:1520px;top:455.70px;font-size:13px;line-height:13px;color:#505050;letter-spacing:0.1px;">Active</div>
<div class="t" style="left:1600px;top:455.70px;font-size:13px;line-height:13px;color:#505050;letter-spacing:-0.15px;">NIS2 Directive (EU), CI…</div>
<div class="t" style="left:1760px;top:455.70px;font-size:13px;line-height:13px;color:#505050;letter-spacing:0.1px;">No</div>
<div class="r" style="left:1900px;top:450px;width:12px;height:22px;overflow:hidden"><div class="r" style="left:10.2px;top:3px;width:3.6px;height:3.6px;border-radius:50%;background:#555"></div><div class="r" style="left:10.2px;top:9px;width:3.6px;height:3.6px;border-radius:50%;background:#555"></div><div class="r" style="left:10.2px;top:15px;width:3.6px;height:3.6px;border-radius:50%;background:#555"></div></div>
<div class="r" style="left:464px;top:482px;width:80px;height:1px;background:#e3e3e3;"></div>
<div class="r" style="left:544px;top:480px;width:93px;height:1px;background:#e3e3e3;"></div>
<div class="r" style="left:637px;top:482px;width:1275px;height:1px;background:#e3e3e3;"></div>
<div class="r" style="left:485px;top:494px;width:18px;height:18px;background:transparent;box-sizing:border-box;border:2px solid #6e6e6e;border-radius:2px;"></div>
<div class="t" style="left:515px;top:495.70px;font-size:13px;line-height:13px;color:#505050;letter-spacing:-0.25px;">BD A</div>
<div class="t" style="left:675px;top:495.70px;font-size:13px;line-height:13px;color:#505050;letter-spacing:0.05px;">High Detection Count</div>
<div class="r" style="left:915px;top:498px;width:10px;height:10px;background:#9cd076;border-radius:50%;"></div>
<div class="t" style="left:931px;top:495.70px;font-size:13px;line-height:13px;color:#505050;letter-spacing:0.1px;">0%</div>
<div class="r" style="left:1076px;top:502.2px;width:3.2px;height:1.7px;background:#6e6e6e;"></div>
<svg class="r" style="left:1202px;top:495px;" width="16" height="16" viewBox="0 0 16 16"><path d="M0.5 2.3 L6.8 1.4 L6.8 7.6 L0.5 7.6 Z M7.7 1.3 L15.5 0.2 L15.5 7.6 L7.7 7.6 Z M0.5 8.5 L6.8 8.5 L6.8 14.6 L0.5 13.7 Z M7.7 8.5 L15.5 8.5 L15.5 15.8 L7.7 14.7 Z" fill="#8a8a8a"/></svg>
<div class="t" style="left:1280px;top:495.70px;font-size:13px;line-height:13px;color:#505050;letter-spacing:0.1px;">Manual</div>
<div class="t" style="left:1440px;top:495.70px;font-size:13px;line-height:13px;color:#505050;letter-spacing:0.1px;">Compliant</div>
<div class="t" style="left:1520px;top:495.70px;font-size:13px;line-height:13px;color:#505050;letter-spacing:0.1px;">Active</div>
<div class="t" style="left:1600px;top:495.70px;font-size:13px;line-height:13px;color:#505050;letter-spacing:-0.15px;">NIS2 Directive (EU), IS…</div>
<div class="t" style="left:1760px;top:495.70px;font-size:13px;line-height:13px;color:#505050;letter-spacing:0.1px;">No</div>
<div class="r" style="left:1900px;top:490px;width:12px;height:22px;overflow:hidden"><div class="r" style="left:10.2px;top:3px;width:3.6px;height:3.6px;border-radius:50%;background:#555"></div><div class="r" style="left:10.2px;top:9px;width:3.6px;height:3.6px;border-radius:50%;background:#555"></div><div class="r" style="left:10.2px;top:15px;width:3.6px;height:3.6px;border-radius:50%;background:#555"></div></div>
<div class="r" style="left:464px;top:522px;width:80px;height:1px;background:#e3e3e3;"></div>
<div class="r" style="left:544px;top:520px;width:93px;height:1px;background:#e3e3e3;"></div>
<div class="r" style="left:637px;top:522px;width:1275px;height:1px;background:#e3e3e3;"></div>
<div class="r" style="left:485px;top:534px;width:18px;height:18px;background:transparent;box-sizing:border-box;border:2px solid #6e6e6e;border-radius:2px;"></div>
<div class="t" style="left:515px;top:535.70px;font-size:13px;line-height:13px;color:#505050;letter-spacing:-0.25px;">BD A</div>
<div class="t" style="left:675px;top:535.70px;font-size:13px;line-height:13px;color:#505050;letter-spacing:0.05px;">Plain HTTP Credentials</div>
<div class="r" style="left:915px;top:538px;width:10px;height:10px;background:#9cd076;border-radius:50%;"></div>
<div class="t" style="left:931px;top:535.70px;font-size:13px;line-height:13px;color:#505050;letter-spacing:0.1px;">0%</div>
<div class="r" style="left:1076px;top:542.2px;width:3.2px;height:1.7px;background:#6e6e6e;"></div>
<svg class="r" style="left:1202px;top:535px;" width="16" height="16" viewBox="0 0 16 16"><path d="M0.5 2.3 L6.8 1.4 L6.8 7.6 L0.5 7.6 Z M7.7 1.3 L15.5 0.2 L15.5 7.6 L7.7 7.6 Z M0.5 8.5 L6.8 8.5 L6.8 14.6 L0.5 13.7 Z M7.7 8.5 L15.5 8.5 L15.5 15.8 L7.7 14.7 Z" fill="#8a8a8a"/></svg>
<div class="t" style="left:1280px;top:535.70px;font-size:13px;line-height:13px;color:#505050;letter-spacing:0.1px;">Manual</div>
<div class="t" style="left:1440px;top:535.70px;font-size:13px;line-height:13px;color:#505050;letter-spacing:0.1px;">Compliant</div>
<div class="t" style="left:1520px;top:535.70px;font-size:13px;line-height:13px;color:#505050;letter-spacing:0.1px;">Active</div>
<div class="t" style="left:1600px;top:535.70px;font-size:13px;line-height:13px;color:#505050;letter-spacing:-0.15px;">ISO/IEC 27001:2022, …</div>
<div class="t" style="left:1760px;top:535.70px;font-size:13px;line-height:13px;color:#505050;letter-spacing:0.1px;">No</div>
<div class="r" style="left:1900px;top:530px;width:12px;height:22px;overflow:hidden"><div class="r" style="left:10.2px;top:3px;width:3.6px;height:3.6px;border-radius:50%;background:#555"></div><div class="r" style="left:10.2px;top:9px;width:3.6px;height:3.6px;border-radius:50%;background:#555"></div><div class="r" style="left:10.2px;top:15px;width:3.6px;height:3.6px;border-radius:50%;background:#555"></div></div>
<div class="r" style="left:464px;top:562px;width:80px;height:1px;background:#e3e3e3;"></div>
<div class="r" style="left:544px;top:560px;width:93px;height:1px;background:#e3e3e3;"></div>
<div class="r" style="left:637px;top:562px;width:1275px;height:1px;background:#e3e3e3;"></div>
<div class="r" style="left:485px;top:574px;width:18px;height:18px;background:transparent;box-sizing:border-box;border:2px solid #6e6e6e;border-radius:2px;"></div>
<div class="t" style="left:515px;top:575.70px;font-size:13px;line-height:13px;color:#505050;letter-spacing:-0.25px;">BD A</div>
<div class="t" style="left:675px;top:575.70px;font-size:13px;line-height:13px;color:#505050;letter-spacing:0.05px;">Password not required</div>
<div class="r" style="left:915px;top:578px;width:10px;height:10px;background:#9cd076;border-radius:50%;"></div>
<div class="t" style="left:931px;top:575.70px;font-size:13px;line-height:13px;color:#505050;letter-spacing:0.1px;">0%</div>
<div class="r" style="left:1076px;top:582.2px;width:3.2px;height:1.7px;background:#6e6e6e;"></div>
<svg class="r" style="left:1202px;top:575px;" width="16" height="16" viewBox="0 0 16 16"><path d="M0.5 2.3 L6.8 1.4 L6.8 7.6 L0.5 7.6 Z M7.7 1.3 L15.5 0.2 L15.5 7.6 L7.7 7.6 Z M0.5 8.5 L6.8 8.5 L6.8 14.6 L0.5 13.7 Z M7.7 8.5 L15.5 8.5 L15.5 15.8 L7.7 14.7 Z" fill="#8a8a8a"/></svg>
<div class="t" style="left:1280px;top:575.70px;font-size:13px;line-height:13px;color:#505050;letter-spacing:0.1px;">Manual</div>
<div class="t" style="left:1440px;top:575.70px;font-size:13px;line-height:13px;color:#505050;letter-spacing:0.1px;">Compliant</div>
<div class="t" style="left:1520px;top:575.70px;font-size:13px;line-height:13px;color:#505050;letter-spacing:0.1px;">Active</div>
<div class="t" style="left:1600px;top:575.70px;font-size:13px;line-height:13px;color:#505050;letter-spacing:-0.15px;">SOC 2, ISO/IEC 27001…</div>
<div class="t" style="left:1760px;top:575.70px;font-size:13px;line-height:13px;color:#505050;letter-spacing:0.1px;">No</div>
<div class="r" style="left:1900px;top:570px;width:12px;height:22px;overflow:hidden"><div class="r" style="left:10.2px;top:3px;width:3.6px;height:3.6px;border-radius:50%;background:#555"></div><div class="r" style="left:10.2px;top:9px;width:3.6px;height:3.6px;border-radius:50%;background:#555"></div><div class="r" style="left:10.2px;top:15px;width:3.6px;height:3.6px;border-radius:50%;background:#555"></div></div>
<div class="r" style="left:464px;top:602px;width:80px;height:1px;background:#e3e3e3;"></div>
<div class="r" style="left:544px;top:600px;width:93px;height:1px;background:#e3e3e3;"></div>
<div class="r" style="left:637px;top:602px;width:1275px;height:1px;background:#e3e3e3;"></div>
<div class="r" style="left:485px;top:614px;width:18px;height:18px;background:transparent;box-sizing:border-box;border:2px solid #6e6e6e;border-radius:2px;"></div>
<div class="t" style="left:515px;top:615.70px;font-size:13px;line-height:13px;color:#505050;letter-spacing:-0.25px;">BD A</div>
<div class="t" style="left:675px;top:615.70px;font-size:13px;line-height:13px;color:#505050;letter-spacing:0.05px;">Shared HTTP Password Internal wit...</div>
<div class="r" style="left:915px;top:618px;width:10px;height:10px;background:#9cd076;border-radius:50%;"></div>
<div class="t" style="left:931px;top:615.70px;font-size:13px;line-height:13px;color:#505050;letter-spacing:0.1px;">0%</div>
<div class="r" style="left:1076px;top:622.2px;width:3.2px;height:1.7px;background:#6e6e6e;"></div>
<svg class="r" style="left:1202px;top:615px;" width="16" height="16" viewBox="0 0 16 16"><path d="M0.5 2.3 L6.8 1.4 L6.8 7.6 L0.5 7.6 Z M7.7 1.3 L15.5 0.2 L15.5 7.6 L7.7 7.6 Z M0.5 8.5 L6.8 8.5 L6.8 14.6 L0.5 13.7 Z M7.7 8.5 L15.5 8.5 L15.5 15.8 L7.7 14.7 Z" fill="#8a8a8a"/></svg>
<div class="t" style="left:1280px;top:615.70px;font-size:13px;line-height:13px;color:#505050;letter-spacing:0.1px;">Manual</div>
<div class="t" style="left:1440px;top:615.70px;font-size:13px;line-height:13px;color:#505050;letter-spacing:0.1px;">Compliant</div>
<div class="t" style="left:1520px;top:615.70px;font-size:13px;line-height:13px;color:#505050;letter-spacing:0.1px;">Active</div>
<div class="t" style="left:1600px;top:615.70px;font-size:13px;line-height:13px;color:#505050;letter-spacing:-0.15px;">SOC 2, NIS2 Directive …</div>
<div class="t" style="left:1760px;top:615.70px;font-size:13px;line-height:13px;color:#505050;letter-spacing:0.1px;">No</div>
<div class="r" style="left:1900px;top:610px;width:12px;height:22px;overflow:hidden"><div class="r" style="left:10.2px;top:3px;width:3.6px;height:3.6px;border-radius:50%;background:#555"></div><div class="r" style="left:10.2px;top:9px;width:3.6px;height:3.6px;border-radius:50%;background:#555"></div><div class="r" style="left:10.2px;top:15px;width:3.6px;height:3.6px;border-radius:50%;background:#555"></div></div>
<div class="r" style="left:464px;top:642px;width:80px;height:1px;background:#e3e3e3;"></div>
<div class="r" style="left:544px;top:640px;width:93px;height:1px;background:#e3e3e3;"></div>
<div class="r" style="left:637px;top:642px;width:1275px;height:1px;background:#e3e3e3;"></div>
<div class="r" style="left:485px;top:654px;width:18px;height:18px;background:transparent;box-sizing:border-box;border:2px solid #6e6e6e;border-radius:2px;"></div>
<div class="t" style="left:515px;top:655.70px;font-size:13px;line-height:13px;color:#505050;letter-spacing:-0.25px;">BD A</div>
<div class="t" style="left:675px;top:655.70px;font-size:13px;line-height:13px;color:#505050;letter-spacing:0.05px;">Idle User</div>
<div class="r" style="left:915px;top:658px;width:10px;height:10px;background:#9cd076;border-radius:50%;"></div>
<div class="t" style="left:931px;top:655.70px;font-size:13px;line-height:13px;color:#505050;letter-spacing:0.1px;">0%</div>
<div class="r" style="left:1076px;top:662.2px;width:3.2px;height:1.7px;background:#6e6e6e;"></div>
<svg class="r" style="left:1202px;top:655px;" width="16" height="16" viewBox="0 0 16 16"><path d="M0.5 2.3 L6.8 1.4 L6.8 7.6 L0.5 7.6 Z M7.7 1.3 L15.5 0.2 L15.5 7.6 L7.7 7.6 Z M0.5 8.5 L6.8 8.5 L6.8 14.6 L0.5 13.7 Z M7.7 8.5 L15.5 8.5 L15.5 15.8 L7.7 14.7 Z" fill="#8a8a8a"/></svg>
<div class="t" style="left:1280px;top:655.70px;font-size:13px;line-height:13px;color:#505050;letter-spacing:0.1px;">Manual</div>
<div class="t" style="left:1440px;top:655.70px;font-size:13px;line-height:13px;color:#505050;letter-spacing:0.1px;">Compliant</div>
<div class="t" style="left:1520px;top:655.70px;font-size:13px;line-height:13px;color:#505050;letter-spacing:0.1px;">Active</div>
<div class="t" style="left:1600px;top:655.70px;font-size:13px;line-height:13px;color:#505050;letter-spacing:-0.15px;">NIS2 Directive (EU), S…</div>
<div class="t" style="left:1760px;top:655.70px;font-size:13px;line-height:13px;color:#505050;letter-spacing:0.1px;">No</div>
<div class="r" style="left:1900px;top:650px;width:12px;height:22px;overflow:hidden"><div class="r" style="left:10.2px;top:3px;width:3.6px;height:3.6px;border-radius:50%;background:#555"></div><div class="r" style="left:10.2px;top:9px;width:3.6px;height:3.6px;border-radius:50%;background:#555"></div><div class="r" style="left:10.2px;top:15px;width:3.6px;height:3.6px;border-radius:50%;background:#555"></div></div>
<div class="r" style="left:464px;top:682px;width:80px;height:1px;background:#e3e3e3;"></div>
<div class="r" style="left:544px;top:680px;width:93px;height:1px;background:#e3e3e3;"></div>
<div class="r" style="left:637px;top:682px;width:1275px;height:1px;background:#e3e3e3;"></div>
<div class="r" style="left:485px;top:694px;width:18px;height:18px;background:transparent;box-sizing:border-box;border:2px solid #6e6e6e;border-radius:2px;"></div>
<div class="t" style="left:515px;top:695.70px;font-size:13px;line-height:13px;color:#505050;letter-spacing:-0.25px;">BD A</div>
<div class="t" style="left:675px;top:695.70px;font-size:13px;line-height:13px;color:#505050;letter-spacing:0.05px;">Old User Password</div>
<div class="r" style="left:915px;top:698px;width:10px;height:10px;background:#9cd076;border-radius:50%;"></div>
<div class="t" style="left:931px;top:695.70px;font-size:13px;line-height:13px;color:#505050;letter-spacing:0.1px;">0%</div>
<div class="r" style="left:1076px;top:702.2px;width:3.2px;height:1.7px;background:#6e6e6e;"></div>
<svg class="r" style="left:1202px;top:695px;" width="16" height="16" viewBox="0 0 16 16"><path d="M0.5 2.3 L6.8 1.4 L6.8 7.6 L0.5 7.6 Z M7.7 1.3 L15.5 0.2 L15.5 7.6 L7.7 7.6 Z M0.5 8.5 L6.8 8.5 L6.8 14.6 L0.5 13.7 Z M7.7 8.5 L15.5 8.5 L15.5 15.8 L7.7 14.7 Z" fill="#8a8a8a"/></svg>
<div class="t" style="left:1280px;top:695.70px;font-size:13px;line-height:13px;color:#505050;letter-spacing:0.1px;">Manual</div>
<div class="t" style="left:1440px;top:695.70px;font-size:13px;line-height:13px;color:#505050;letter-spacing:0.1px;">Compliant</div>
<div class="t" style="left:1520px;top:695.70px;font-size:13px;line-height:13px;color:#505050;letter-spacing:0.1px;">Active</div>
<div class="t" style="left:1600px;top:695.70px;font-size:13px;line-height:13px;color:#505050;letter-spacing:-0.15px;">SOC 2, ISO/IEC 27001…</div>
<div class="t" style="left:1760px;top:695.70px;font-size:13px;line-height:13px;color:#505050;letter-spacing:0.1px;">No</div>
<div class="r" style="left:1900px;top:690px;width:12px;height:22px;overflow:hidden"><div class="r" style="left:10.2px;top:3px;width:3.6px;height:3.6px;border-radius:50%;background:#555"></div><div class="r" style="left:10.2px;top:9px;width:3.6px;height:3.6px;border-radius:50%;background:#555"></div><div class="r" style="left:10.2px;top:15px;width:3.6px;height:3.6px;border-radius:50%;background:#555"></div></div>
<div class="r" style="left:464px;top:722px;width:80px;height:1px;background:#e3e3e3;"></div>
<div class="r" style="left:544px;top:720px;width:93px;height:1px;background:#e3e3e3;"></div>
<div class="r" style="left:637px;top:722px;width:1275px;height:1px;background:#e3e3e3;"></div>
<div class="r" style="left:485px;top:734px;width:18px;height:18px;background:transparent;box-sizing:border-box;border:2px solid #6e6e6e;border-radius:2px;"></div>
<div class="t" style="left:515px;top:735.70px;font-size:13px;line-height:13px;color:#505050;letter-spacing:-0.25px;">BD A</div>
<div class="t" style="left:675px;top:735.70px;font-size:13px;line-height:13px;color:#505050;letter-spacing:0.05px;">Public WiFi connection</div>
<div class="r" style="left:915px;top:738px;width:10px;height:10px;background:#9cd076;border-radius:50%;"></div>
<div class="t" style="left:931px;top:735.70px;font-size:13px;line-height:13px;color:#505050;letter-spacing:0.1px;">0%</div>
<div class="r" style="left:1076px;top:742.2px;width:3.2px;height:1.7px;background:#6e6e6e;"></div>
<svg class="r" style="left:1202px;top:735px;" width="16" height="16" viewBox="0 0 16 16"><path d="M0.5 2.3 L6.8 1.4 L6.8 7.6 L0.5 7.6 Z M7.7 1.3 L15.5 0.2 L15.5 7.6 L7.7 7.6 Z M0.5 8.5 L6.8 8.5 L6.8 14.6 L0.5 13.7 Z M7.7 8.5 L15.5 8.5 L15.5 15.8 L7.7 14.7 Z" fill="#8a8a8a"/></svg>
<div class="t" style="left:1280px;top:735.70px;font-size:13px;line-height:13px;color:#505050;letter-spacing:0.1px;">Manual</div>
<div class="t" style="left:1440px;top:735.70px;font-size:13px;line-height:13px;color:#505050;letter-spacing:0.1px;">Compliant</div>
<div class="t" style="left:1520px;top:735.70px;font-size:13px;line-height:13px;color:#505050;letter-spacing:0.1px;">Active</div>
<div class="t" style="left:1600px;top:735.70px;font-size:13px;line-height:13px;color:#505050;letter-spacing:-0.15px;">GDPR (EU), ISO/IEC 2…</div>
<div class="t" style="left:1760px;top:735.70px;font-size:13px;line-height:13px;color:#505050;letter-spacing:0.1px;">No</div>
<div class="r" style="left:1900px;top:730px;width:12px;height:22px;overflow:hidden"><div class="r" style="left:10.2px;top:3px;width:3.6px;height:3.6px;border-radius:50%;background:#555"></div><div class="r" style="left:10.2px;top:9px;width:3.6px;height:3.6px;border-radius:50%;background:#555"></div><div class="r" style="left:10.2px;top:15px;width:3.6px;height:3.6px;border-radius:50%;background:#555"></div></div>
<div class="r" style="left:464px;top:762px;width:80px;height:1px;background:#e3e3e3;"></div>
<div class="r" style="left:544px;top:760px;width:93px;height:1px;background:#e3e3e3;"></div>
<div class="r" style="left:637px;top:762px;width:1275px;height:1px;background:#e3e3e3;"></div>
<div class="r" style="left:485px;top:774px;width:18px;height:18px;background:transparent;box-sizing:border-box;border:2px solid #6e6e6e;border-radius:2px;"></div>
<div class="t" style="left:515px;top:775.70px;font-size:13px;line-height:13px;color:#505050;letter-spacing:-0.25px;">BD A</div>
<div class="t" style="left:675px;top:775.70px;font-size:13px;line-height:13px;color:#505050;letter-spacing:0.05px;">Removable Device Infection</div>
<div class="r" style="left:915px;top:778px;width:10px;height:10px;background:#9cd076;border-radius:50%;"></div>
<div class="t" style="left:931px;top:775.70px;font-size:13px;line-height:13px;color:#505050;letter-spacing:0.1px;">0%</div>
<div class="r" style="left:1076px;top:782.2px;width:3.2px;height:1.7px;background:#6e6e6e;"></div>
<svg class="r" style="left:1202px;top:775px;" width="16" height="16" viewBox="0 0 16 16"><path d="M0.5 2.3 L6.8 1.4 L6.8 7.6 L0.5 7.6 Z M7.7 1.3 L15.5 0.2 L15.5 7.6 L7.7 7.6 Z M0.5 8.5 L6.8 8.5 L6.8 14.6 L0.5 13.7 Z M7.7 8.5 L15.5 8.5 L15.5 15.8 L7.7 14.7 Z" fill="#8a8a8a"/></svg>
<div class="t" style="left:1280px;top:775.70px;font-size:13px;line-height:13px;color:#505050;letter-spacing:0.1px;">Manual</div>
<div class="t" style="left:1440px;top:775.70px;font-size:13px;line-height:13px;color:#505050;letter-spacing:0.1px;">Compliant</div>
<div class="t" style="left:1520px;top:775.70px;font-size:13px;line-height:13px;color:#505050;letter-spacing:0.1px;">Active</div>
<div class="t" style="left:1600px;top:775.70px;font-size:13px;line-height:13px;color:#505050;letter-spacing:-0.15px;">ISO/IEC 27001:2022, …</div>
<div class="t" style="left:1760px;top:775.70px;font-size:13px;line-height:13px;color:#505050;letter-spacing:0.1px;">No</div>
<div class="r" style="left:1900px;top:770px;width:12px;height:22px;overflow:hidden"><div class="r" style="left:10.2px;top:3px;width:3.6px;height:3.6px;border-radius:50%;background:#555"></div><div class="r" style="left:10.2px;top:9px;width:3.6px;height:3.6px;border-radius:50%;background:#555"></div><div class="r" style="left:10.2px;top:15px;width:3.6px;height:3.6px;border-radius:50%;background:#555"></div></div>
<div class="r" style="left:464px;top:802px;width:80px;height:1px;background:#e3e3e3;"></div>
<div class="r" style="left:544px;top:800px;width:93px;height:1px;background:#e3e3e3;"></div>
<div class="r" style="left:637px;top:802px;width:1275px;height:1px;background:#e3e3e3;"></div>
<div class="r" style="left:485px;top:814px;width:18px;height:18px;background:transparent;box-sizing:border-box;border:2px solid #6e6e6e;border-radius:2px;"></div>
<div class="t" style="left:515px;top:815.70px;font-size:13px;line-height:13px;color:#505050;letter-spacing:-0.25px;">BD A</div>
<div class="t" style="left:675px;top:815.70px;font-size:13px;line-height:13px;color:#505050;letter-spacing:0.05px;">Old HTTP Password</div>
<div class="r" style="left:915px;top:818px;width:10px;height:10px;background:#9cd076;border-radius:50%;"></div>
<div class="t" style="left:931px;top:815.70px;font-size:13px;line-height:13px;color:#505050;letter-spacing:0.1px;">0%</div>
<div class="r" style="left:1076px;top:822.2px;width:3.2px;height:1.7px;background:#6e6e6e;"></div>
<svg class="r" style="left:1202px;top:815px;" width="16" height="16" viewBox="0 0 16 16"><path d="M0.5 2.3 L6.8 1.4 L6.8 7.6 L0.5 7.6 Z M7.7 1.3 L15.5 0.2 L15.5 7.6 L7.7 7.6 Z M0.5 8.5 L6.8 8.5 L6.8 14.6 L0.5 13.7 Z M7.7 8.5 L15.5 8.5 L15.5 15.8 L7.7 14.7 Z" fill="#8a8a8a"/></svg>
<div class="t" style="left:1280px;top:815.70px;font-size:13px;line-height:13px;color:#505050;letter-spacing:0.1px;">Manual</div>
<div class="t" style="left:1440px;top:815.70px;font-size:13px;line-height:13px;color:#505050;letter-spacing:0.1px;">Compliant</div>
<div class="t" style="left:1520px;top:815.70px;font-size:13px;line-height:13px;color:#505050;letter-spacing:0.1px;">Active</div>
<div class="t" style="left:1600px;top:815.70px;font-size:13px;line-height:13px;color:#505050;letter-spacing:-0.15px;">NIS2 Directive (EU), S…</div>
<div class="t" style="left:1760px;top:815.70px;font-size:13px;line-height:13px;color:#505050;letter-spacing:0.1px;">No</div>
<div class="r" style="left:1900px;top:810px;width:12px;height:22px;overflow:hidden"><div class="r" style="left:10.2px;top:3px;width:3.6px;height:3.6px;border-radius:50%;background:#555"></div><div class="r" style="left:10.2px;top:9px;width:3.6px;height:3.6px;border-radius:50%;background:#555"></div><div class="r" style="left:10.2px;top:15px;width:3.6px;height:3.6px;border-radius:50%;background:#555"></div></div>
<div class="r" style="left:464px;top:842px;width:80px;height:1px;background:#e3e3e3;"></div>
<div class="r" style="left:544px;top:840px;width:93px;height:1px;background:#e3e3e3;"></div>
<div class="r" style="left:637px;top:842px;width:1275px;height:1px;background:#e3e3e3;"></div>
<div class="r" style="left:485px;top:854px;width:18px;height:18px;background:transparent;box-sizing:border-box;border:2px solid #6e6e6e;border-radius:2px;"></div>
<div class="t" style="left:515px;top:855.70px;font-size:13px;line-height:13px;color:#505050;letter-spacing:-0.25px;">BD A</div>
<div class="t" style="left:675px;top:855.70px;font-size:13px;line-height:13px;color:#505050;letter-spacing:0.05px;">Browsing Infection</div>
<div class="r" style="left:915px;top:858px;width:10px;height:10px;background:#9cd076;border-radius:50%;"></div>
<div class="t" style="left:931px;top:855.70px;font-size:13px;line-height:13px;color:#505050;letter-spacing:0.1px;">0%</div>
<div class="r" style="left:1076px;top:862.2px;width:3.2px;height:1.7px;background:#6e6e6e;"></div>
<svg class="r" style="left:1202px;top:855px;" width="16" height="16" viewBox="0 0 16 16"><path d="M0.5 2.3 L6.8 1.4 L6.8 7.6 L0.5 7.6 Z M7.7 1.3 L15.5 0.2 L15.5 7.6 L7.7 7.6 Z M0.5 8.5 L6.8 8.5 L6.8 14.6 L0.5 13.7 Z M7.7 8.5 L15.5 8.5 L15.5 15.8 L7.7 14.7 Z" fill="#8a8a8a"/></svg>
<div class="t" style="left:1280px;top:855.70px;font-size:13px;line-height:13px;color:#505050;letter-spacing:0.1px;">Manual</div>
<div class="t" style="left:1440px;top:855.70px;font-size:13px;line-height:13px;color:#505050;letter-spacing:0.1px;">Compliant</div>
<div class="t" style="left:1520px;top:855.70px;font-size:13px;line-height:13px;color:#505050;letter-spacing:0.1px;">Active</div>
<div class="t" style="left:1600px;top:855.70px;font-size:13px;line-height:13px;color:#505050;letter-spacing:-0.15px;">ISO/IEC 27001:2022, …</div>
<div class="t" style="left:1760px;top:855.70px;font-size:13px;line-height:13px;color:#505050;letter-spacing:0.1px;">No</div>
<div class="r" style="left:1900px;top:850px;width:12px;height:22px;overflow:hidden"><div class="r" style="left:10.2px;top:3px;width:3.6px;height:3.6px;border-radius:50%;background:#555"></div><div class="r" style="left:10.2px;top:9px;width:3.6px;height:3.6px;border-radius:50%;background:#555"></div><div class="r" style="left:10.2px;top:15px;width:3.6px;height:3.6px;border-radius:50%;background:#555"></div></div>
<div class="r" style="left:1912px;top:205px;width:8px;height:628px;background:#dcdcdc;"></div>
<div class="r" style="left:1920px;top:2px;width:9px;height:918px;background:#efefef;"></div>
<div class="r" style="left:1927px;top:2px;width:1px;height:58px;background:#d8d8d8;"></div>
<div class="r" style="left:464px;top:878px;width:1423px;height:9px;background:#e0e0e0;"></div>
<div class="r" style="left:544px;top:868px;width:93px;height:6px;background:#dcdcdc;"></div>
<div class="r" style="left:1887px;top:886px;width:33px;height:1px;background:#e3e3e3;"></div>
<div class="t" style="left:485.5px;top:900.84px;font-size:12px;line-height:12px;color:#555;letter-spacing:0.2px;">1-17 of 17 items</div>
<svg class="r" style="left:1880px;top:898px;" width="16" height="16" viewBox="0 0 16 16"><path d="M12.74 10.75 A5.7 5.7 0 1 1 11.46 3.53" fill="none" stroke="#7a7a7a" stroke-width="1.5"/><path d="M15 1 L15 7 L9.3 7 Z" fill="#7a7a7a"/></svg>
<div class="r tb" style="left:228px;top:6px;width:224px;height:459px;border-radius:14px"></div>
<div class="r tb" style="left:475px;top:91px;width:548px;height:45px;border-radius:14px"></div>
<div class="r tb" style="left:1425px;top:49px;width:474px;height:41px;border-radius:14px"></div>
<div class="r tb" style="left:475px;top:148px;width:1352px;height:41px;border-radius:14px"></div>
<div class="r tb" style="left:475px;top:201px;width:1382px;height:670px;border-radius:14px"></div>
<div class="r tb" style="left:1882px;top:201px;width:37px;height:670px;border-radius:14px"></div>
<svg class="r" style="left:415px;top:431px;mix-blend-mode:multiply" width="32" height="32" viewBox="0 0 32 32"><circle cx="16" cy="16" r="16" fill="#97dbd9"/><path d="M12 9.9 L17.4 9.9 M17.4 9.2 L17.4 24.8" fill="none" stroke="#3b3b3b" stroke-width="1.35"/></svg>
<svg class="r" style="left:989px;top:102px;mix-blend-mode:multiply" width="32" height="32" viewBox="0 0 32 32"><circle cx="16" cy="16" r="16" fill="#97dbd9"/><path d="M10.7 11 Q12.4 8.9 16.1 8.9 Q21.5 8.9 21.5 13.3 Q21.5 15.6 19 17.9 L11 24.3 L22.6 24.3" fill="none" stroke="#3b3b3b" stroke-width="1.35"/></svg>
<svg class="r" style="left:1793px;top:157px;mix-blend-mode:multiply" width="32" height="32" viewBox="0 0 32 32"><circle cx="16" cy="16" r="16" fill="#97dbd9"/><path d="M10.1 9.2 L20.6 9.2 L14.4 16 Q15.2 15.9 16 15.9 Q21.7 15.9 21.7 20.2 Q21.7 24.6 15.9 24.6 Q12.3 24.6 10.3 22.3" fill="none" stroke="#3b3b3b" stroke-width="1.35"/></svg>
<svg class="r" style="left:1435px;top:58px;mix-blend-mode:multiply" width="32" height="32" viewBox="0 0 32 32"><circle cx="16" cy="16" r="16" fill="#97dbd9"/><path d="M18.7 8.5 L9.5 19.6 L22.7 19.6 M18.9 15.2 L18.9 24.6" fill="none" stroke="#3b3b3b" stroke-width="1.35"/></svg>
<svg class="r" style="left:1825px;top:208px;mix-blend-mode:multiply" width="32" height="32" viewBox="0 0 32 32"><circle cx="16" cy="16" r="16" fill="#97dbd9"/><path d="M20.8 9.2 L12.2 9.2 L11.6 15.9 Q13.6 15.6 16 15.6 Q21.8 15.6 21.8 20.1 Q21.8 24.6 15.9 24.6 Q12.3 24.6 10.3 22.3" fill="none" stroke="#3b3b3b" stroke-width="1.35"/></svg>
<svg class="r" style="left:1889px;top:209px;mix-blend-mode:multiply" width="32" height="32" viewBox="0 0 32 32"><circle cx="16" cy="16" r="16" fill="#97dbd9"/><path d="M20.1 9.7 Q18.7 8.7 16.6 8.7 Q9.9 8.7 9.9 17.4 Q9.9 24.6 15.9 24.6 Q21.4 24.6 21.4 19.7 Q21.4 14.8 15.9 14.8 Q11.6 14.8 10.1 18.4" fill="none" stroke="#3b3b3b" stroke-width="1.35"/></svg>
</body></html>
